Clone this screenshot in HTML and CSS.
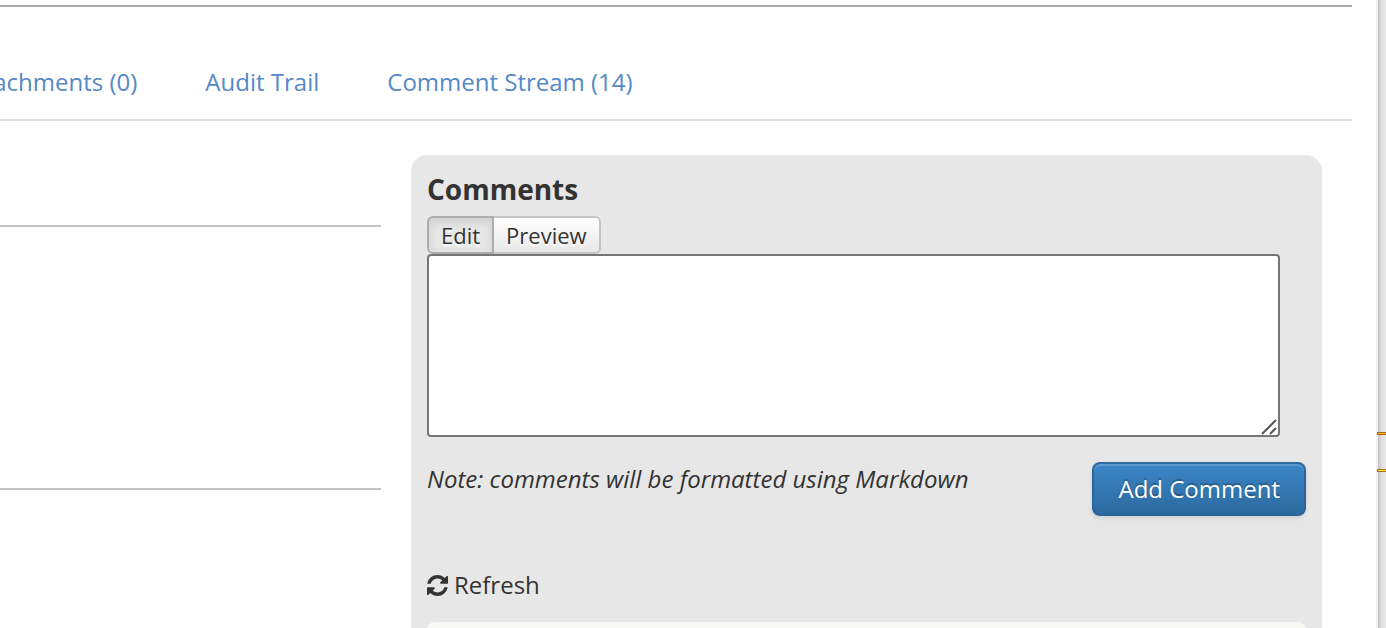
FILE: index.html
```html
<!DOCTYPE html>
<html lang="en">
<head>
<meta charset="utf-8">
<title>Comments</title>
<link rel="stylesheet" href="styles.css">
</head>
<body>
<div class="page">
  <main class="main">
    <nav class="tabs">
      <a class="tab" href="#attachments">Attachments (0)</a>
      <a class="tab" href="#audit">Audit Trail</a>
      <a class="tab" href="#stream">Comment Stream (14)</a>
    </nav>
    <div class="columns">
      <div class="details">
        <hr class="rule">
        <hr class="rule">
      </div>
      <section class="comments">
        <h2 class="title"><label for="comment">Comments</label></h2>
        <div class="modes">
          <button class="mode active" type="button">Edit</button>
          <button class="mode" type="button">Preview</button>
        </div>
        <div class="editor">
          <textarea class="field" id="comment"></textarea>
          <svg class="grip" viewBox="0 0 16 16" aria-hidden="true"><path d="M1 15 15 1M9 15l6-6"/></svg>
        </div>
        <div class="actions">
          <em class="note">Note: comments will be formatted using Markdown</em>
          <button class="submit" type="button">Add Comment</button>
        </div>
        <button class="refresh" type="button">
          <svg class="refresh-icon" viewBox="0 0 1536 1536" aria-hidden="true"><path d="M1511 928q0 5-1 7-64 268-268 434.5t-478 166.5q-146 0-282.5-55t-243.5-157l-129 129q-19 19-45 19t-45-19-19-45v-448q0-26 19-45t45-19h448q26 0 45 19t19 45-19 45l-137 137q71 66 161 102t187 36q134 0 250-65t186-179q11-17 53-117 8-23 30-23h192q13 0 22.500 9.500t9.500 22.500zm25-800v448q0 26-19 45t-45 19h-448q-26 0-45-19t-19-45 19-45l138-138q-148-137-349-137-134 0-250 65t-186 179q-11 17-53 117-8 23-30 23h-199q-13 0-22.500-9.500t-9.500-22.500v-7q65-268 270-434.500t480-166.500q146 0 284 55.500t245 156.500l130-129q19-19 45-19t45 19 19 45z"/></svg>
          <span>Refresh</span>
        </button>
        <div class="entry"></div>
      </section>
    </div>
  </main>
  <div class="track">
    <span class="mark mark-orange"></span>
    <span class="mark"></span>
  </div>
</div>
</body>
</html>
```
FILE: styles.css
```css
* { box-sizing: border-box; }
body {
  margin: 0;
  background: #fff;
  color: #333;
  font: 24px/36px "Open Sans", "Noto Sans", sans-serif;
}
button { font: inherit; color: inherit; cursor: pointer; }
.page {
  display: flex;
  height: 100vh;
  overflow: hidden;
}
.main {
  flex: 1;
  min-width: 0;
  padding: 5px 24px 0 0;
}
.tabs {
  display: flex;
  gap: 68px;
  margin-left: -39px;
  padding: 57px 0 19px;
  border-top: 2px solid #a9a9a9;
  border-bottom: 2px solid #ddd;
}
.tab {
  color: #5589c7;
  text-decoration: none;
  white-space: nowrap;
}
.columns {
  display: flex;
  gap: 30px;
  padding: 34px 30px 0 0;
}
.details {
  flex: 0 0 381px;
  padding-top: 70px;
}
.rule {
  height: 2px;
  margin: 0 0 261px;
  border: 0;
  background: #c2c2c2;
}
.comments {
  flex: 1;
  min-width: 0;
  padding: 16px 16px 0;
  border-radius: 16px;
  background: #e7e7e7;
}
.title {
  margin: 0 0 9px;
  font-size: 28px;
  line-height: 36px;
}
.modes { display: flex; }
.mode {
  height: 38px;
  padding: 0 12px;
  border: 2px solid #c4c4c4;
  border-left: 0;
  border-radius: 0 6px 6px 0;
  background: linear-gradient(#fff, #e8e8e8);
  font-size: 22px;
  line-height: 34px;
  text-shadow: 0 2px 2px #fff;
}
.mode.active {
  border: 2px solid #acacac;
  border-radius: 6px 0 0 6px;
  background: #e6e6e6;
  box-shadow: inset 0 4px 8px rgba(0, 0, 0, .1);
}
.editor {
  position: relative;
  margin-right: 26px;
}
.field {
  display: block;
  width: 100%;
  height: 183px;
  padding: 8px;
  border: 2px solid #767676;
  border-radius: 4px;
  background: #fff;
  font: inherit;
  resize: none;
  outline: 0;
}
.grip {
  position: absolute;
  right: 3px;
  bottom: 2px;
  width: 16px;
  height: 16px;
  fill: none;
  stroke: #555;
  stroke-width: 2;
}
.actions {
  display: flex;
  justify-content: space-between;
  align-items: flex-start;
  margin-top: 25px;
}
.note { line-height: 34px; }
.submit {
  height: 54px;
  padding: 0 24px;
  border: 2px solid #2b669a;
  border-top-color: #2d6ca2;
  border-radius: 8px;
  background: linear-gradient(#3b86c8, #2d6a9f);
  box-shadow: inset 0 2px 0 rgba(255, 255, 255, .17), 0 2px 4px rgba(0, 0, 0, .1);
  color: #fff;
  text-shadow: 0 -2px 1px rgba(0, 0, 0, .25);
}
.refresh {
  display: flex;
  align-items: center;
  gap: 6px;
  margin: 51px 0 19px;
  padding: 0;
  border: 0;
  background: none;
}
.refresh-icon {
  width: 21px;
  height: 21px;
  fill: #333;
}
.entry {
  height: 120px;
  border-radius: 8px;
  background: #f8f8f4;
}
.track {
  flex: 0 0 10px;
  padding: 432px 0 0 1px;
  background: linear-gradient(90deg, #f0f0f0 2px, #bcbcbc 2px, #d2d2d2 4px, #e1e1e1 6px, #e7e7e7 9px);
}
.mark {
  display: block;
  height: 3px;
  margin-bottom: 34px;
  border: 1px solid #a77020;
  border-right: 0;
  background: #ffe32e;
}
.mark-orange {
  border-color: #b85f18;
  background: #ffbd35;
}
```
